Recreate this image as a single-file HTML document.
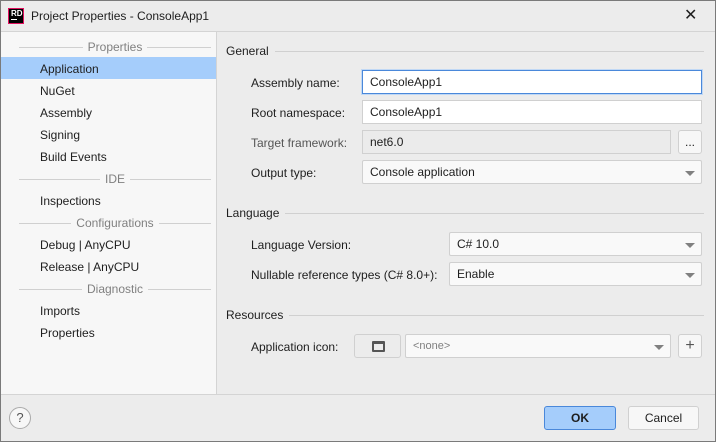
<!DOCTYPE html><html><head><style>
body{margin:0;width:716px;height:442px;overflow:hidden;font-family:"Liberation Sans",sans-serif;font-size:12px;color:#1e1e1e}
.win{position:absolute;left:0;top:0;width:716px;height:442px;background:#ececec}
.frame{position:absolute;left:0;top:0;width:716px;height:442px;box-sizing:border-box;border:1px solid #7a7a7a;pointer-events:none}
.abs{position:absolute}
.title{left:0;top:0;width:716px;height:31px;background:#ececec;border-bottom:1px solid #d4d4d4}
.side{left:1px;top:32px;width:215px;height:362px;background:#f7f7f7;border-right:1px solid #d4d4d4}
.hdr{position:absolute;left:18px;width:192px;height:14px;color:#808080;text-align:center}
.hdr span{background:#f7f7f7;padding:0 5px;position:relative}
.hdr:before{content:"";position:absolute;left:0;right:0;top:7px;border-top:1px solid #d0d0d0}
.it{position:absolute;left:39px}
.sec{position:absolute;left:226px;width:478px;color:#1e1e1e}
.sec span{background:#ececec;padding-right:6px;position:relative}
.sec:before{content:"";position:absolute;left:0;right:0;top:7px;border-top:1px solid #d0d0d0}
.lbl{position:absolute;left:251px}
.inp{position:absolute;background:#fff;border:1px solid #d0d0d0;box-sizing:border-box;padding-left:7px;line-height:23px}
.cmb{position:absolute;background:#f9f9f9;border:1px solid #d0d0d0;border-radius:2px;box-sizing:border-box;padding-left:7px;line-height:23px}
.cmb:after{content:"";position:absolute;right:6px;top:10px;border-left:5px solid transparent;border-right:5px solid transparent;border-top:5px solid #808080}
.btn{position:absolute;background:#f7f7f7;border:1px solid #d0d0d0;border-radius:3px;box-sizing:border-box;text-align:center;line-height:22px}
</style></head><body><div class="win">
<div class="abs title">
<div class="abs" style="left:8px;top:8px;width:16px;height:16px;background:#000;border:1px solid #e0115f;box-sizing:border-box;color:#fff;font-size:8px;font-weight:bold;line-height:9px;padding-left:2px">RD<div style="width:6px;border-top:1px solid #fff;margin-top:1px"></div></div>
<div class="abs" style="left:31px;top:9px">Project Properties - ConsoleApp1</div>
<div class="abs" style="left:684px;top:5px;font-size:16px">✕</div>
</div>
<div class="abs side">
<div class="hdr" style="top:8px"><span>Properties</span></div>
<div class="abs" style="left:0;top:25px;width:215px;height:22px;background:#a5cdfb"></div>
<div class="it" style="top:30px">Application</div>
<div class="it" style="top:52px">NuGet</div>
<div class="it" style="top:74px">Assembly</div>
<div class="it" style="top:96px">Signing</div>
<div class="it" style="top:118px">Build Events</div>
<div class="hdr" style="top:140px"><span>IDE</span></div>
<div class="it" style="top:162px">Inspections</div>
<div class="hdr" style="top:184px"><span>Configurations</span></div>
<div class="it" style="top:206px">Debug | AnyCPU</div>
<div class="it" style="top:228px">Release | AnyCPU</div>
<div class="hdr" style="top:250px"><span>Diagnostic</span></div>
<div class="it" style="top:272px">Imports</div>
<div class="it" style="top:294px">Properties</div>
</div>
<div class="sec" style="top:44px"><span>General</span></div>
<div class="lbl" style="top:76px">Assembly name:</div>
<div class="inp" style="left:362px;top:70px;width:340px;height:24px;border:1px solid #4a88da;box-shadow:0 0 0 1px #c0d8f5">ConsoleApp1</div>
<div class="lbl" style="top:106px">Root namespace:</div>
<div class="inp" style="left:362px;top:100px;width:340px;height:24px">ConsoleApp1</div>
<div class="lbl" style="top:136px;color:#555">Target framework:</div>
<div class="inp" style="left:362px;top:130px;width:309px;height:24px;background:#ebebeb">net6.0</div>
<div class="btn" style="left:678px;top:130px;width:24px;height:24px">...</div>
<div class="lbl" style="top:166px">Output type:</div>
<div class="cmb" style="left:362px;top:160px;width:340px;height:24px">Console application</div>
<div class="sec" style="top:206px"><span>Language</span></div>
<div class="lbl" style="top:238px">Language Version:</div>
<div class="cmb" style="left:449px;top:232px;width:253px;height:24px">C# 10.0</div>
<div class="lbl" style="top:268px">Nullable reference types (C# 8.0+):</div>
<div class="cmb" style="left:449px;top:262px;width:253px;height:24px">Enable</div>
<div class="sec" style="top:308px"><span>Resources</span></div>
<div class="lbl" style="top:340px">Application icon:</div>
<div class="btn" style="left:354px;top:334px;width:47px;height:24px;background:#ececec"><div style="position:absolute;left:17px;top:6px;width:13px;height:11px;border:2px solid #555;border-top-width:3px;box-sizing:border-box;border-radius:1px"></div></div>
<div class="cmb" style="left:405px;top:334px;width:266px;height:24px;color:#808080;font-size:11px">&lt;none&gt;</div>
<div class="btn" style="left:678px;top:334px;width:24px;height:24px;font-size:16px;color:#555">+</div>
<div class="abs" style="left:0;top:394px;width:716px;border-top:1px solid #d4d4d4"></div>
<div class="abs" style="left:9px;top:407px;width:20px;height:20px;border:1px solid #aaa;border-radius:50%;background:#f7f7f7;text-align:center;line-height:20px;color:#555;font-size:13px">?</div>
<div class="btn" style="left:544px;top:406px;width:72px;height:24px;background:#a5cdfb;border-color:#4a88da;font-weight:bold">OK</div>
<div class="btn" style="left:628px;top:406px;width:71px;height:24px">Cancel</div>
</div><div class="frame"></div></body></html>
